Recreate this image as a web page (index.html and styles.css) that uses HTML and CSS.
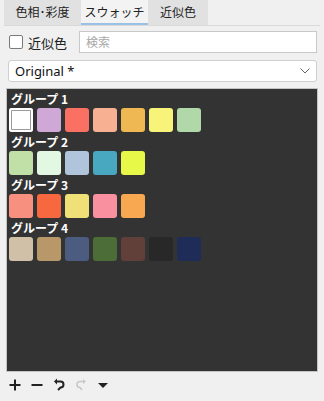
FILE: index.html
```html
<!DOCTYPE html>
<html lang="ja">
<head>
<meta charset="utf-8">
<link rel="stylesheet" href="styles.css">
</head>
<body>
<div class="tabs">
  <div class="tab">色相･彩度</div>
  <div class="tab active">スウォッチ</div>
  <div class="tab">近似色</div>
</div>
<div class="search-row">
  <label class="check"><span class="box"></span><span>近似色</span></label>
  <div class="input">検索</div>
</div>
<div class="select">
  <span>Original *</span>
  <svg class="chev" width="10" height="6" viewBox="0 0 10 6"><path d="M0.5 0.5 L5 5 L9.5 0.5" fill="none" stroke="#666" stroke-width="1"/></svg>
</div>
<div class="panel">
  <div class="group">
    <div class="glabel">グループ 1</div>
    <div class="swatches">
      <div class="sw selected" style="background:#ffffff"></div>
      <div class="sw" style="background:#d0a8d8"></div>
      <div class="sw" style="background:#fa7062"></div>
      <div class="sw" style="background:#f8b092"></div>
      <div class="sw" style="background:#f0b852"></div>
      <div class="sw" style="background:#f8f47a"></div>
      <div class="sw" style="background:#b0d8a8"></div>
    </div>
  </div>
  <div class="group">
    <div class="glabel">グループ 2</div>
    <div class="swatches">
      <div class="sw" style="background:#c0e0a8"></div>
      <div class="sw" style="background:#e2f8e2"></div>
      <div class="sw" style="background:#b0c4dc"></div>
      <div class="sw" style="background:#48a8c0"></div>
      <div class="sw" style="background:#e8f848"></div>
    </div>
  </div>
  <div class="group">
    <div class="glabel">グループ 3</div>
    <div class="swatches">
      <div class="sw" style="background:#f89080"></div>
      <div class="sw" style="background:#f86840"></div>
      <div class="sw" style="background:#f0e078"></div>
      <div class="sw" style="background:#f890a0"></div>
      <div class="sw" style="background:#f8a850"></div>
    </div>
  </div>
  <div class="group">
    <div class="glabel">グループ 4</div>
    <div class="swatches">
      <div class="sw" style="background:#d0c0a8"></div>
      <div class="sw" style="background:#b89868"></div>
      <div class="sw" style="background:#4c5c80"></div>
      <div class="sw" style="background:#4c6c38"></div>
      <div class="sw" style="background:#604038"></div>
      <div class="sw" style="background:#282828"></div>
      <div class="sw" style="background:#202c58"></div>
    </div>
  </div>
</div>
<div class="toolbar">
  <svg class="icon" width="14" height="14" viewBox="0 0 14 14"><path d="M7 1.5V12.5M1.5 7H12.5" stroke="#222" stroke-width="2"/></svg>
  <svg class="icon" width="14" height="14" viewBox="0 0 14 14"><path d="M1.5 7H12.5" stroke="#222" stroke-width="2"/></svg>
  <svg class="icon" width="14" height="14" viewBox="0 0 14 14"><path d="M4 3.5H8.5A3 3 0 0 1 8.5 9.5L6 12" fill="none" stroke="#222" stroke-width="2"/><path d="M5 0.5L2 3.5L5 6.5Z" fill="#222"/></svg>
  <svg class="icon" width="14" height="14" viewBox="0 0 14 14"><path d="M9.5 3.5H6A3 3 0 0 0 6 9.5L8 12" fill="none" stroke="#c8c8c8" stroke-width="1.6"/><path d="M9 1L12 3.5L9 6Z" fill="#c8c8c8"/></svg>
  <svg class="icon" width="14" height="14" viewBox="0 0 14 14"><path d="M2 5H12L7 10Z" fill="#222"/></svg>
</div>
</body>
</html>
```

FILE: styles.css
```css
html, body {
  margin: 0;
  padding: 0;
}
body {
  width: 324px;
  height: 401px;
  background: #f0f0f0;
  font-family: "Noto Sans CJK JP", "Noto Sans", sans-serif;
  font-size: 12px;
  color: #222;
  overflow: hidden;
}
.tabs {
  display: flex;
  margin: 0 4px 0 4px;
  height: 25px;
  border-bottom: 1px solid #d9d9d9;
}
.tab {
  height: 25px;
  line-height: 24px;
  text-align: center;
  background: #e1e1e1;
  box-sizing: border-box;
}
.tab:nth-child(1) { width: 77px; }
.tab:nth-child(2) { width: 67px; }
.tab:nth-child(3) { width: 60px; }
.tab.active {
  background: #f3f3f3;
  border-bottom: 2px solid #9ac0e4;
}
.search-row {
  display: flex;
  align-items: center;
  margin: 5px 7px 0 9px;
  height: 22px;
  gap: 12px;
}
.check {
  display: flex;
  align-items: center;
  gap: 5px;
  font-size: 13px;
}
.box {
  width: 12px;
  height: 12px;
  border: 1px solid #7a7a7a;
  background: #fff;
  border-radius: 2px;
}
.input {
  flex: 1;
  height: 22px;
  box-sizing: border-box;
  border: 1px solid #c8c8c8;
  background: #fff;
  color: #a8a8a8;
  padding-left: 6px;
  line-height: 20px;
  font-size: 12px;
}
.select {
  display: flex;
  align-items: center;
  justify-content: space-between;
  margin: 7px 7px 0 8px;
  height: 22px;
  box-sizing: border-box;
  border: 1px solid #cfcfcf;
  border-radius: 3px;
  background: #fff;
  padding: 0 6px 0 6px;
  font-family: "Noto Sans", sans-serif;
  font-size: 13px;
  color: #111;
}
.panel {
  margin: 6px 6px 0 6px;
  height: 284px;
  box-sizing: border-box;
  border: 1px solid #c4c4c4;
  background: #333333;
  padding: 2px 0 0 2px;
}
.group {
  margin-bottom: 2px;
}
.glabel {
  color: #fff;
  font-weight: bold;
  font-size: 12px;
  line-height: 16px;
  padding-left: 2px;
}
.swatches {
  display: flex;
  gap: 4px;
  margin-top: 1px;
}
.sw {
  width: 24px;
  height: 24px;
  border-radius: 3px;
}
.sw.selected {
  box-shadow: inset 0 0 0 2px #fff, inset 0 0 0 3px #9a9a9a;
}
.toolbar {
  display: flex;
  align-items: center;
  gap: 8px;
  margin: 5px 0 0 8px;
  height: 16px;
}
.icon {
  display: block;
}
```
